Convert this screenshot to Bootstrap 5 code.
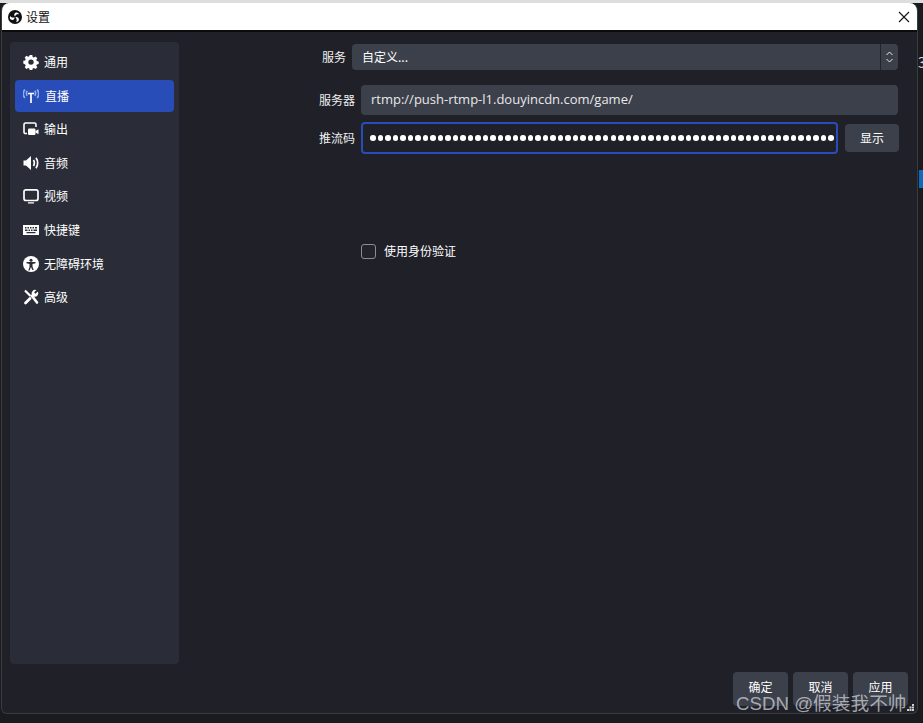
<!DOCTYPE html>
<html lang="zh-CN">
<head>
<meta charset="UTF-8">
<title>设置</title>
<link href="https://cdn.jsdelivr.net/npm/bootstrap@5.3.0/dist/css/bootstrap.min.css" rel="stylesheet">
<style>
    html, body { height: 100%; }
    body {
        background: #1a1b1e;
        color: #fff;
        font-family: "Noto Sans CJK SC", "Liberation Sans", sans-serif;
        font-size: 12px;
        overflow: hidden;
    }
    .desk-top { height: 3px; background: #dedede; }
    .obs-window {
        width: 917px;
        height: 711px;
        margin-left: 1px;
        background: #1f2028;
        border: solid #3a3b40;
        border-width: 0 1px 1px 1px;
        border-radius: 8px 8px 6px 6px;
        overflow: hidden;
    }
    .title-bar { height: 29px; background: #fff; color: #111; border-bottom: 2px solid #0b0b0e; padding-left: 6px; }
    .title-bar svg.close-x { margin-right: 7px; }
    .side-panel { width: 169px; margin: 10px 0 49px 8px; background: #2a2d38; border-radius: 4px; padding: 4px 5px; }
    .side-item { height: 32px; margin-bottom: 1.6px; padding-left: 8px; gap: 5px; color: #fff; border-radius: 4px; }
    .side-item.is-active { background: #284cb8; }
    .side-item.is-active span { margin-left: 1px; }
    .side-item svg { width: 16px; height: 16px; flex: none; }
    .form-pane { padding: 12px 20px 0 0; }
    .field-row { margin-bottom: 7px; }
    .field-label { width: 182px; text-align: right; padding-right: 6px; color: #f0f0f0; }
    .label-short { width: 173px; }
    .obs-select { height: 26px; background: #3c404b; border-radius: 4px; padding-left: 10px; }
    .spin-box { width: 18px; height: 100%; border-left: 1px solid #22242b; }
    .obs-input { height: 30px; background: #3c404b; border-radius: 4px; padding-left: 10px; color: #e8e8e8; font-family: "Open Sans", "Liberation Sans", sans-serif; font-size: 13px; }
    .obs-key { height: 32px; width: 477px; background: #1f2028; border: 2px solid #284cb8; border-radius: 4px; padding-left: 7px; overflow: hidden; }
    .key-dot { width: 5.5px; height: 5.5px; margin-right: 2.02px; background: #fff; border-radius: 50%; flex: none; }
    .obs-btn { background: #3c404b; color: #fff; border: 0; border-radius: 4px; font-size: 12px; padding: 0; line-height: 1; }
    .btn-show { width: 54px; height: 28px; margin: 0 -1px 0 7px; flex: none; }
    .auth-row { margin: 88px 0 0 182px; }
    .auth-check { width: 15px; height: 15px; border: 1.5px solid #8a8d94; border-radius: 3px; background: #23242b; margin-right: 8px; }
    .foot-btns { position: absolute; right: 9px; bottom: 7px; gap: 5px; }
    .btn-foot { width: 55px; height: 34px; padding-bottom: 4px; }
    .csdn-mark { position: absolute; left: 736px; top: 692px; color: rgba(214, 216, 220, .72); font-size: 18.7px; line-height: 24px; white-space: nowrap; font-family: "Liberation Sans", "Noto Sans CJK SC", sans-serif; }
    .grip { position: absolute; right: 3px; bottom: 2px; }
    .desk-scrap { position: absolute; }
    .scrap-blue { left: 919px; top: 170px; width: 4px; height: 18px; background: #0f6cbd; }
    .scrap-text { left: 918px; top: 52px; font-size: 14px; color: #d5d5d5; }
</style>
</head>
<body>
<div class="desk-top"></div>
<div class="obs-window d-flex flex-column">
    <div class="title-bar d-flex align-items-center flex-shrink-0">
        <svg width="14" height="14" viewBox="0 0 14 14">
            <circle cx="7" cy="7" r="7" fill="#111"/>
            <path d="M7 6.600C5.700 5.400 6 2.900 8 2.500 9.500 2.200 10.900 3.200 11 4.600 10.200 3.700 8.500 3.800 7 6.600zM7.400 7.200C9.200 6.600 11.300 7.900 10.900 9.900 10.600 11.300 9 12.200 7.700 11.700 8.900 11.300 9.400 9.600 7.400 7.200zM6.600 7.400C6.600 9.300 4.600 10.700 2.900 9.600 1.800 8.900 1.500 7.200 2.300 6 2.600 7.100 4 7.900 6.600 7.400z" fill="#fff"/>
        </svg>
        <span class="ms-1">设置</span>
        <svg class="close-x ms-auto" width="12" height="12" viewBox="0 0 12 12"><path d="M1 1l10 10M11 1L1 11" stroke="#111" stroke-width="1.1"/></svg>
    </div>
    <div class="d-flex flex-grow-1 position-relative">
        <div class="side-panel flex-shrink-0">
            <div class="side-item d-flex align-items-center">
                <svg viewBox="0 0 16 16" fill="#fff"><path fill-rule="evenodd" d="M6.700 1h2.600l.4 1.900 1.200.5 1.600-1 1.800 1.800-1 1.600.5 1.200 1.900.4v2.600l-1.900.4-.5 1.200 1 1.600-1.800 1.800-1.600-1-1.200.5-.4 1.900H6.700l-.4-1.900-1.200-.5-1.600 1-1.800-1.800 1-1.600-.5-1.200L.3 9.400V6.800l1.900-.4.5-1.200-1-1.600 1.800-1.800 1.600 1 1.200-.5zM8 5.400a2.700 2.700 0 1 0 0 5.400 2.700 2.700 0 0 0 0-5.400z"/></svg>
                <span>通用</span>
            </div>
            <div class="side-item is-active d-flex align-items-center">
                <svg viewBox="0 0 16 16" fill="none"><path d="M8 5.500V15" stroke="#fff" stroke-width="1.700"/><path d="M5 5.500h6" stroke="#fff" stroke-width="1.700"/><path d="M4.200 2.800c-1 1.500-1 3.500 0 5M11.800 2.800c1 1.500 1 3.500 0 5M1.800 1.500c-1.800 2.500-1.800 6 0 8.500M14.200 1.500c1.800 2.500 1.800 6 0 8.500" stroke="#8fb0f0" stroke-width="1.600"/></svg>
                <span>直播</span>
            </div>
            <div class="side-item d-flex align-items-center">
                <svg viewBox="0 0 16 16" fill="none"><path d="M4 12.500H2.500A1.500 1.500 0 0 1 1 11V3.500A1.500 1.500 0 0 1 2.500 2h9A1.500 1.500 0 0 1 13 3.500V6" stroke="#fff" stroke-width="1.600"/><rect x="5" y="7.500" width="7.500" height="6.500" rx="1.200" fill="#fff"/><path d="M12.500 10l3-1.800v5.100l-3-1.800z" fill="#fff"/></svg>
                <span>输出</span>
            </div>
            <div class="side-item d-flex align-items-center">
                <svg viewBox="0 0 16 16" fill="none"><path d="M.5 5.500H3L8 1v14l-5-4.500H.5z" fill="#fff"/><path d="M10.500 5c1 1.800 1 4.200 0 6M13 2.800c1.900 3 1.900 7.400 0 10.400" stroke="#fff" stroke-width="1.700"/></svg>
                <span>音频</span>
            </div>
            <div class="side-item d-flex align-items-center">
                <svg viewBox="0 0 16 16" fill="none"><rect x="1" y="1.800" width="14" height="10.700" rx="2" stroke="#fff" stroke-width="1.700"/><path d="M5 14.800h6" stroke="#fff" stroke-width="1.300"/></svg>
                <span>视频</span>
            </div>
            <div class="side-item d-flex align-items-center">
                <svg viewBox="0 0 16 16"><path fill="#fff" fill-rule="evenodd" d="M0 3h16v10H0zm2 2v1.500h1.500V5zm2.500 0v1.500H6V5zM7 5v1.500h1.500V5zm2.500 0v1.500H11V5zM12 5v1.500h2V5zM2 7.500V9h2.500V7.500zm3.500 0V9H7V7.500zm2.500 0V9h1.500V7.500zm2.500 0V9H14V7.500zM3.500 10v1.300h9V10z"/></svg>
                <span>快捷键</span>
            </div>
            <div class="side-item d-flex align-items-center">
                <svg viewBox="0 0 16 16"><circle cx="8" cy="8" r="8" fill="#fff"/><circle cx="8" cy="4.200" r="1.500" fill="#2a2d38"/><path d="M3.500 6h9v1.300l-3 .7v2.500l1.200 3.500h-1.300L8 11l-1.400 3.500H5.300l1.200-3.500V8l-3-.7z" fill="#2a2d38"/></svg>
                <span>无障碍环境</span>
            </div>
            <div class="side-item d-flex align-items-center">
                <svg viewBox="0 0 16 16" fill="none" stroke="#fff"><path d="M2 1.500l5.500 5.500" stroke-width="2.200"/><path d="M7 9.500L2.500 14" stroke-width="2.800" stroke-linecap="round"/><path d="M9 7l5 6.500" stroke-width="2.600" stroke-linecap="round"/><path d="M14.800 2.500l-2.300 2.200-1.400-1.300 2.200-2.300a3.500 3.500 0 0 0-4.500 4.500l-1.500 1.500 2 2 1.500-1.500a3.500 3.500 0 0 0 4-5.100z" fill="#fff" stroke="none"/></svg>
                <span>高级</span>
            </div>
        </div>
        <div class="form-pane flex-grow-1 d-flex flex-column">
            <div class="d-flex align-items-center field-row">
                <div class="field-label label-short flex-shrink-0">服务</div>
                <div class="obs-select flex-grow-1 d-flex align-items-center justify-content-between">
                    <span>自定义...</span>
                    <span class="spin-box d-flex align-items-center justify-content-center">
                        <svg width="9" height="16" viewBox="0 0 9 16" fill="none" stroke="#e8e8e8"><path d="M1.500 6l3-3 3 3M1.500 10l3 3 3-3"/></svg>
                    </span>
                </div>
            </div>
            <div class="d-flex align-items-center field-row pt-2">
                <div class="field-label flex-shrink-0">服务器</div>
                <div class="obs-input flex-grow-1 d-flex align-items-center">rtmp://push-rtmp-l1.douyincdn.com/game/</div>
            </div>
            <div class="d-flex align-items-center">
                <div class="field-label flex-shrink-0">推流码</div>
                <div class="obs-key d-flex align-items-center" id="keyBox"></div>
                <button class="obs-btn btn-show" type="button">显示</button>
            </div>
            <div class="d-flex align-items-center auth-row">
                <span class="auth-check"></span>
                <span>使用身份验证</span>
            </div>
        </div>
        <div class="foot-btns d-flex">
            <button class="obs-btn btn-foot" type="button">确定</button>
            <button class="obs-btn btn-foot" type="button">取消</button>
            <button class="obs-btn btn-foot" type="button">应用</button>
        </div>
        <svg class="grip" width="7" height="7" viewBox="0 0 7 7" fill="#d0d0d0"><rect x="5" width="2" height="2"/><rect x="2.500" y="2.500" width="2" height="2"/><rect x="5" y="2.500" width="2" height="2"/><rect y="5" width="2" height="2"/><rect x="2.500" y="5" width="2" height="2"/><rect x="5" y="5" width="2" height="2"/></svg>
    </div>
</div>
<div class="csdn-mark">CSDN @假装我不帅</div>
<div class="desk-scrap scrap-blue"></div>
<div class="desk-scrap scrap-text">3</div>
<script>
    // password dots
    var keyBox = document.getElementById("keyBox");
    for (var i = 0; i < 62; i++) {
        var dot = document.createElement("span");
        dot.className = "key-dot";
        keyBox.appendChild(dot);
    }
</script>
<script src="https://cdn.jsdelivr.net/npm/bootstrap@5.3.0/dist/js/bootstrap.bundle.min.js"></script>
</body>
</html>
